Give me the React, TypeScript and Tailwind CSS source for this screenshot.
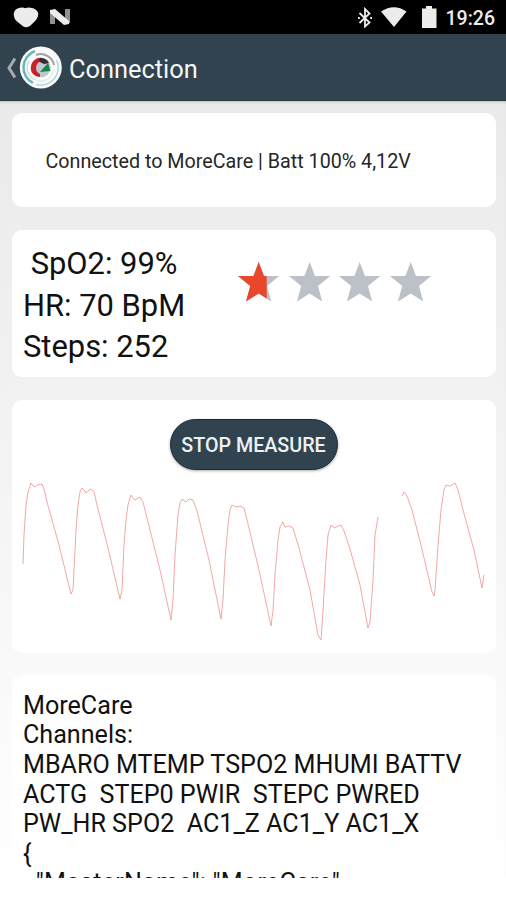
import type { ReactNode } from 'react';

const PULSE =
  '23,564 24,535 26,505 28,492 30,486 31,483 33,486 35,487 37,485 42,484 44,489 47,502 59,545 71,594 73,590 74,570 76,530 78,505 80,492 82,488 84,490 86,493 88,491 91,489 94,492 97,505 108,548 120,599 122,590 124,545 126,520 128,505 131,495 133,498 135,500 138,498 140,497 143,502 148,522 160,570 171,620 173,600 175,555 178,515 180,503 182,499 186,502 189,499 193,500 197,511 209,560 221,619 223,600 225,560 228,525 230,510 232,505 236,507 240,506 244,508 248,524 259,570 271,626 273,610 275,575 278,540 280,527 283,522 285,527 289,526 293,528 299,548 310,590 318,635 321,640 323,610 326,560 328,535 331,525 335,528 338,526 341,525 344,531 350,549 360,585 368,628 370,622 373,580 375,535 378,517';

const PULSE_TAIL =
  '402,496 404,492 407,496 412,510 421,545 432,592 434,596 435,590 438,545 441,510 444,490 446,485 450,486 455,483 458,490 463,510 474,550 482,588 484,575';

const STAR = '20.7,0 26,14 41.2,14 29,24 33.2,39.5 20.7,31.5 8,39.5 12.2,24 0,14 15.4,14';

const CHANNELS = [
  'MBARO MTEMP TSPO2 MHUMI BATTV',
  'ACTG  STEP0 PWIR  STEPC PWRED',
  'PW_HR SPO2  AC1_Z AC1_Y AC1_X',
];

function Card({ className, children }: { className: string; children: ReactNode }) {
  return <section className={`rounded-[10px] bg-white ${className}`}>{children}</section>;
}

function Star({ fill = 0 }: { fill?: number }) {
  return (
    <svg width="42" height="40" viewBox="0 0 42 40">
      <polygon points={STAR} fill="#bbc1c6" />
      {fill > 0 && (
        <>
          <clipPath id="star-fill">
            <rect width={fill * 41} height="40" />
          </clipPath>
          <polygon points={STAR} fill="#e8472c" clipPath="url(#star-fill)" />
        </>
      )}
    </svg>
  );
}

function StatusBar() {
  return (
    <div className="flex h-[34px] items-center bg-black pl-[13px] pr-[11px] text-[#ececec]">
      <svg width="26" height="22" viewBox="0 0 26 22" fill="#ececec">
        <path d="M12.500 2.200Q9 .8 4.500 2.500Q.5 4.500 .7 9Q1 13 4 15.500L10 20.300Q14 22.500 17.500 19.500L23 14Q26 10.500 25 6.500Q23 2.500 19 2Q15 1 12.500 2.200Z" />
      </svg>
      <svg className="ml-[10px]" width="22" height="18" viewBox="0 0 22 18">
        <path d="M1 2h5v14H1zM16 1h5v14h-5z" fill="#909090" />
        <path d="M1 2L6 1L20 13V16L15 17L1 5Z" fill="#ececec" />
      </svg>
      <svg className="ml-auto mt-[2px]" width="14" height="22" viewBox="0 0 14 22" fill="none" stroke="#ececec" strokeWidth="1.800">
        <path d="M1.500 6L11.500 15.500L7 19.500V2L11.500 6.500L1.500 16" />
        <path d="M0 11h1.800M12.200 11h1.800" />
      </svg>
      <svg className="ml-[9px]" width="26" height="20" viewBox="0 0 26 20" fill="#ececec">
        <path d="M0 4.500Q13-4 25.500 4.500L13 20Z" />
      </svg>
      <svg className="ml-[15px]" width="15" height="22" viewBox="0 0 15 22" fill="#ececec">
        <path d="M4 0h6v2.500h4.500V22H0V2.500h4z" />
      </svg>
      <span className="ml-[9px] mt-[3px] text-[19.500px] font-medium leading-6">19:26</span>
    </div>
  );
}

function AppBar() {
  return (
    <header className="flex h-[67px] items-center border-b border-[#263943] bg-[#31434f] pl-[6px]">
      <svg className="mt-[2px]" width="11" height="22" viewBox="0 0 11 22" fill="none" stroke="#a4acb1" strokeWidth="3">
        <path d="M9 1.500L3 11L9 20.500" />
      </svg>
      <svg className="ml-[2px] mt-px" width="43" height="43" viewBox="0 0 43 43" fill="none">
        <circle cx="21.800" cy="21.500" r="21" fill="#fafafa" />
        <path d="M16 5A17.500 17.500 0 0 0 14 37" stroke="#69b5bb" strokeWidth="2.500" />
        <path d="M17 38.500A17.500 17.500 0 0 0 37.500 14" stroke="#a9d9db" strokeWidth="1.500" />
        <path d="M17 9A13.500 13.500 0 0 1 35 19" stroke="#a0a0a0" strokeWidth="2" />
        <path d="M10 15A13 13 0 0 0 17 34" stroke="#d5d8d9" strokeWidth="1.500" />
        <path d="M18 35A14 14 0 0 0 35 24" stroke="#dde3e4" strokeWidth="1" />
        <circle cx="21.800" cy="21.500" r="9.800" fill="#bfc6ce" />
        <path d="M23 12Q17 11 13 17Q10 24 14 28Q17 31 21 31L21 28Q17 26 17 22Q17 17 22 15Z" fill="#c9202b" />
        <path d="M21 12Q27 11.500 30 17L25 18L20 15.500Z" fill="#3a2b31" />
        <path d="M29 17L31.500 25L21 26Z" fill="#138846" />
      </svg>
      <h1 className="ml-[7px] mt-[4px] text-[25.400px] leading-8 text-[#f4f6f7]">Connection</h1>
    </header>
  );
}

export default function App() {
  return (
    <div className="h-[900px] w-[506px] overflow-hidden bg-white font-['Roboto',sans-serif] text-[#111]">
      <StatusBar />
      <AppBar />
      <main className="flex h-[777px] flex-col overflow-hidden bg-linear-to-b from-[#eaeaea] to-white pl-3 pr-[10px] pt-3 shadow-[inset_0_3px_3px_-2px_#bcbcbc]">
        <Card className="flex h-[94px] shrink-0 items-center pl-[33.500px] pt-[3px]">
          <p className="text-[19.720px] leading-6 text-[#262626]">Connected to MoreCare | Batt 100% 4,12V</p>
        </Card>

        {/* Vitals and quality rating */}
        <Card className="mt-[23px] flex h-[147px] shrink-0 pl-[11px] pt-[13px]">
          <div className="w-[215px] whitespace-pre text-[30.900px] leading-[41.500px]">
            <p> SpO2: 99%</p>
            <p>HR: 70 BpM</p>
            <p>Steps: 252</p>
          </div>
          <div className="mt-[19px] flex gap-[8.700px] self-start">
            <Star fill={0.7} />
            <Star />
            <Star />
            <Star />
          </div>
        </Card>

        {/* Live pulse wave */}
        <Card className="mt-[23px] flex h-[253px] shrink-0 flex-col items-center pt-[19px]">
          <button className="h-[51px] w-[168px] rounded-full border border-[#182c38] bg-[#30434f] pr-px pt-[2px] text-[19.700px] font-medium text-[#eef1f3] shadow-[0_1px_3px_#0005]">
            STOP MEASURE
          </button>
          <svg className="h-[183px] w-[484px]" viewBox="12 470 484 183" fill="none" stroke="#e9847e" strokeWidth="0.700">
            <polyline points={PULSE} />
            <polyline points={PULSE_TAIL} />
          </svg>
        </Card>

        <Card className="mt-[22px] h-[260px] shrink-0 whitespace-pre pl-[11px] pt-[15.500px] text-[25.140px] leading-[29.700px]">
          <p>MoreCare</p>
          <p>Channels:</p>
          {CHANNELS.map((line) => (
            <p key={line}>{line}</p>
          ))}
          <p>{'{'}</p>
          <p className="-mt-px tracking-[0.200px]">{'  "MasterName": "MoreCare"'}</p>
        </Card>
      </main>
    </div>
  );
}
